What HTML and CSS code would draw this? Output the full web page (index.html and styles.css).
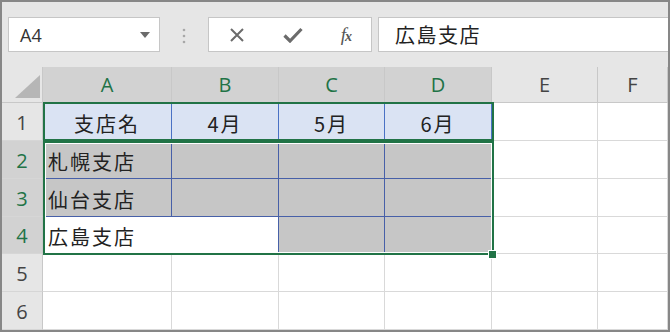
FILE: index.html
```html
<!DOCTYPE html>
<html lang="ja">
<head>
    <meta charset="UTF-8">
    <title>広島支店 - Sheet</title>
    <link rel="stylesheet" href="styles.css">
</head>
<body>
    <div class="window">
        <div class="formula-bar">
            <div class="name-box">
                <span>A4</span>
                <svg class="dropdown" width="10" height="6" viewBox="0 0 10 6"><path d="M0 0h10L5 6z" fill="#6b6b6b"/></svg>
            </div>
            <div class="grip">
                <svg width="4" height="16" viewBox="0 0 4 16"><circle cx="2" cy="2" r="1.3" fill="#a8a8a8"/><circle cx="2" cy="8" r="1.3" fill="#a8a8a8"/><circle cx="2" cy="14" r="1.3" fill="#a8a8a8"/></svg>
            </div>
            <div class="fx-buttons">
                <svg width="16" height="16" viewBox="0 0 16 16"><path d="M2 2l12 12M14 2L2 14" stroke="#6b6b6b" stroke-width="2"/></svg>
                <svg width="20" height="16" viewBox="0 0 20 16"><path d="M1.5 8.5l5.5 5.5L18.5 2" stroke="#6b6b6b" stroke-width="3.2" fill="none"/></svg>
                <span class="fx">f<span class="fx-x">x</span></span>
            </div>
            <div class="formula-input">広島支店</div>
        </div>

        <div class="sheet">
            <!-- header row -->
            <div class="corner">
                <svg width="41" height="36" viewBox="0 0 41 36"><path d="M13 31h25V8z" fill="#b6b6b6"/></svg>
            </div>
            <div class="col-head active">A</div>
            <div class="col-head active">B</div>
            <div class="col-head active">C</div>
            <div class="col-head active">D</div>
            <div class="col-head">E</div>
            <div class="col-head">F</div>

            <!-- row 1 -->
            <div class="row-head">1</div>
            <div class="cell title center">支店名</div>
            <div class="cell title center">4月</div>
            <div class="cell title center">5月</div>
            <div class="cell title center">6月</div>
            <div class="cell"></div>
            <div class="cell"></div>

            <!-- row 2 -->
            <div class="row-head active">2</div>
            <div class="cell shade">札幌支店</div>
            <div class="cell shade"></div>
            <div class="cell shade"></div>
            <div class="cell shade"></div>
            <div class="cell"></div>
            <div class="cell"></div>

            <!-- row 3 -->
            <div class="row-head active">3</div>
            <div class="cell shade">仙台支店</div>
            <div class="cell shade"></div>
            <div class="cell shade"></div>
            <div class="cell shade"></div>
            <div class="cell"></div>
            <div class="cell"></div>

            <!-- row 4 -->
            <div class="row-head active">4</div>
            <div class="cell merged">広島支店</div>
            <div class="cell shade last-row"></div>
            <div class="cell shade last-row"></div>
            <div class="cell"></div>
            <div class="cell"></div>

            <!-- row 5 -->
            <div class="row-head">5</div>
            <div class="cell"></div>
            <div class="cell"></div>
            <div class="cell"></div>
            <div class="cell"></div>
            <div class="cell"></div>
            <div class="cell"></div>

            <!-- row 6 -->
            <div class="row-head">6</div>
            <div class="cell"></div>
            <div class="cell"></div>
            <div class="cell"></div>
            <div class="cell"></div>
            <div class="cell"></div>
            <div class="cell"></div>

            <div class="selection sel-title"></div>
            <div class="selection sel-body"></div>
            <div class="fill-handle"></div>
        </div>
    </div>
</body>
</html>
```

FILE: styles.css
```css
body {
    margin: 0;
    font-family: "Open Sans", "Noto Sans CJK JP", sans-serif;
    background: #fff;
}
.window {
    position: relative;
    width: 670px;
    height: 332px;
    box-sizing: border-box;
    border: 2px solid #878787;
    background: #e6e6e6;
    overflow: hidden;
}

/* formula bar */
.formula-bar {
    display: flex;
    align-items: center;
    height: 65px;
    padding-left: 6px;
    box-sizing: border-box;
}
.name-box {
    width: 152px;
    height: 35px;
    box-sizing: border-box;
    display: flex;
    align-items: center;
    justify-content: space-between;
    padding: 0 9px 0 11px;
    background: #fff;
    border: 1px solid #c6c6c6;
    font-size: 18px;
    color: #333;
}
.grip {
    width: 48px;
    display: flex;
    justify-content: center;
    padding-top: 2px;
}
.fx-buttons {
    width: 164px;
    height: 35px;
    box-sizing: border-box;
    display: flex;
    align-items: center;
    justify-content: space-between;
    padding: 0 20px 0 20px;
    background: #fff;
    border: 1px solid #c6c6c6;
}
.fx {
    font-family: "Liberation Serif", serif;
    font-style: italic;
    font-size: 19px;
    color: #555;
    letter-spacing: -1px;
}
.fx-x {
    font-size: 14px;
    font-weight: bold;
}
.formula-input {
    flex: 1;
    height: 35px;
    box-sizing: border-box;
    margin-left: 6px;
    padding-left: 16px;
    display: flex;
    align-items: center;
    background: #fff;
    border: 1px solid #c6c6c6;
    border-right: none;
    font-family: "Noto Sans CJK JP", sans-serif;
    font-size: 20px;
    letter-spacing: 1.5px;
    color: #222;
}

/* grid */
.sheet {
    position: relative;
    display: grid;
    grid-template-columns: 41px 129px 107px 106px 107px 106px 1fr;
    grid-template-rows: 36px 38px 38px 38px 37px 38px 38px;
    background: #fff;
}
.corner {
    background: #e6e6e6;
    border-right: 1px solid #c8c8c8;
    border-bottom: 1px solid #c8c8c8;
    box-sizing: border-box;
}
.corner svg {
    display: block;
}
.col-head, .row-head {
    display: flex;
    align-items: center;
    justify-content: center;
    box-sizing: border-box;
    background: #e6e6e6;
    color: #444;
    font-size: 20px;
    border-right: 1px solid #c8c8c8;
    border-bottom: 1px solid #c8c8c8;
}
.row-head {
    border-bottom-color: #d6d6d6;
    padding-top: 1px;
}
.col-head.active, .row-head.active {
    background: #d2d2d2;
    color: #217346;
}
.cell {
    box-sizing: border-box;
    display: flex;
    align-items: center;
    padding: 3px 0 0 5px;
    border-right: 1px solid #d9d9d9;
    border-bottom: 1px solid #d9d9d9;
    font-family: "Noto Sans CJK JP", sans-serif;
    font-size: 20px;
    letter-spacing: 2px;
    color: #222;
    white-space: nowrap;
}
.cell.center {
    justify-content: center;
    padding-left: 0;
}
.cell.title {
    background: #dae3f3;
    border-right-color: #4a72c4;
}
.cell.shade {
    background: #c6c6c6;
    border-right-color: #4760a8;
    border-bottom-color: #4760a8;
}
.cell.merged {
    grid-column: span 2;
    background: #fff;
    border-right-color: #4760a8;
}
.cell.last-row {
    border-bottom-color: #d9d9d9;
}

/* selections drawn over the grid */
.selection {
    position: absolute;
    left: 41px;
    width: 451px;
    box-sizing: border-box;
    border: 2px solid #217346;
}
.sel-title {
    top: 35px;
    height: 39px;
}
.sel-body {
    top: 74px;
    height: 114px;
    box-shadow: inset 0 0 0 1px #fff;
}
.fill-handle {
    position: absolute;
    left: 486px;
    top: 183px;
    width: 7px;
    height: 7px;
    background: #217346;
    border: 1px solid #fff;
}
```
